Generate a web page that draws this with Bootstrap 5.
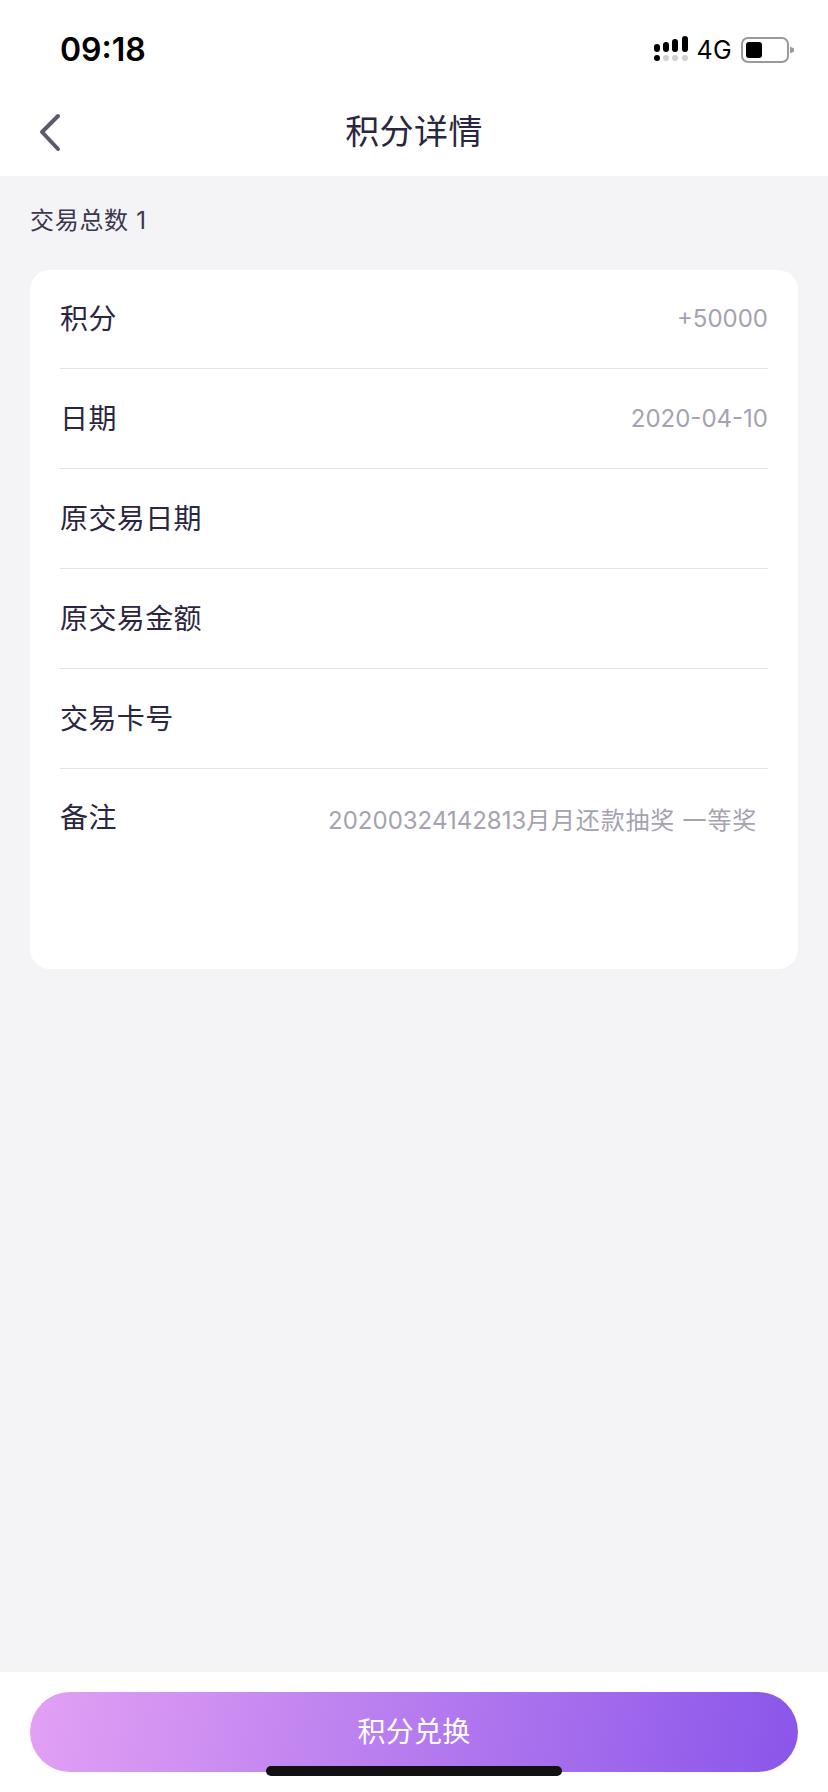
<!DOCTYPE html>
<html lang="zh-CN">
<head>
  <meta charset="UTF-8">
  <title>积分详情</title>
  <link href="https://cdn.jsdelivr.net/npm/bootstrap@5.3.2/dist/css/bootstrap.min.css" rel="stylesheet">
  <style>
    body { background: #f4f4f6; font-family: "Inter", "Noto Sans CJK SC", sans-serif; color: #2b2640; }
    .page-wrap { height: 1792px; }
    .status-bar { height: 88px; padding: 0 33px 0 60px; }
    .status-time { font-size: 32px; font-weight: 600; color: #000; line-height: 1; margin-top: 11px; }
    .status-net { font-size: 25px; color: #000; line-height: 1; margin: 12px 9px 0 7px; letter-spacing: .3px; }
    .status-icons { margin-top: 12px; }
    .title-bar { height: 88px; }
    .back-btn { left: 30px; top: 19px; width: 40px; height: 48px; }
    .page-title { font-size: 34px; line-height: 1; margin-top: -1px; letter-spacing: .4px; }
    .total-line { font-size: 24px; line-height: 34px; padding: 28px 30px 32px; color: #3c3650; letter-spacing: .7px; }
    .detail-card { margin: 0 30px; height: 699px; border: 0; border-radius: 20px; }
    .detail-row { height: 100px; margin: 0 30px; padding: 0; border-bottom: 1px solid #e3e3e6; }
    .detail-row:first-child { height: 99px; }
    .detail-row:last-child { border-bottom: 0; }
    .detail-row .row-label { font-size: 28px; line-height: 40px; letter-spacing: .4px; }
    .detail-row .row-value { font-size: 24px; line-height: 34px; color: #a5a2b1; }
    .note-row { padding-top: 29px; height: auto; }
    .note-row .row-value { padding-right: 11px; padding-top: 6px; }
    .note-cjk { letter-spacing: .8px; }
    .foot-bar { height: 120px; padding: 20px 30px 0; }
    .swap-btn { height: 80px; border: 0; border-radius: 40px; font-size: 28px; letter-spacing: .3px; color: #fff; background: linear-gradient(100deg, #e2a1f4 0%, #8a55ea 100%); }
    .home-bar { left: 266px; top: 1766px; width: 296px; height: 10px; border-radius: 5px; background: #111; }
  </style>
</head>
<body>
  <div class="page-wrap d-flex flex-column position-relative">
    <div class="bg-white">
      <div class="status-bar d-flex align-items-center">
        <span class="status-time">09:18</span>
        <svg class="status-icons ms-auto" width="36" height="28" viewBox="0 0 36 28">
          <rect x="0" y="8" width="6" height="8" rx="3" fill="#000"/>
          <rect x="9" y="6" width="6" height="10" rx="3" fill="#000"/>
          <rect x="18" y="3" width="6" height="13" rx="3" fill="#000"/>
          <rect x="28" y="0" width="6" height="16" rx="3" fill="#000"/>
          <circle cx="3" cy="22" r="3" fill="#000"/>
          <circle cx="12" cy="22" r="3" fill="#d0d0d0"/>
          <circle cx="21" cy="22" r="3" fill="#d0d0d0"/>
          <circle cx="31" cy="22" r="3" fill="#d0d0d0"/>
        </svg>
        <span class="status-net">4G</span>
        <svg class="status-icons" width="54" height="26" viewBox="0 0 54 26">
          <rect x="1" y="1" width="46" height="24" rx="6" fill="none" stroke="#999" stroke-width="2"/>
          <rect x="5" y="5" width="16" height="16" rx="3" fill="#000"/>
          <path d="M49 9.5 L53 11.5 V14.5 L49 16.5 Z" fill="#999"/>
        </svg>
      </div>
      <div class="title-bar position-relative d-flex align-items-center justify-content-center">
        <svg class="back-btn position-absolute" viewBox="0 0 40 48">
          <path d="M28 9 L12 25 L28 42" fill="none" stroke="#5f5670" stroke-width="4" stroke-linecap="round" stroke-linejoin="round"/>
        </svg>
        <span class="page-title">积分详情</span>
      </div>
    </div>

    <div class="total-line">交易总数 1</div>

    <div class="card detail-card">
      <div class="list-group list-group-flush">
        <div class="detail-row d-flex justify-content-between align-items-center">
          <span class="row-label">积分</span><span class="row-value">+50000</span>
        </div>
        <div class="detail-row d-flex justify-content-between align-items-center">
          <span class="row-label">日期</span><span class="row-value">2020-04-10</span>
        </div>
        <div class="detail-row d-flex align-items-center"><span class="row-label">原交易日期</span></div>
        <div class="detail-row d-flex align-items-center"><span class="row-label">原交易金额</span></div>
        <div class="detail-row d-flex align-items-center"><span class="row-label">交易卡号</span></div>
        <div class="detail-row note-row d-flex justify-content-between align-items-start">
          <span class="row-label">备注</span><span class="row-value">20200324142813<span class="note-cjk">月月还款抽奖 一等奖</span></span>
        </div>
      </div>
    </div>

    <div class="foot-bar bg-white mt-auto">
      <button type="button" class="btn swap-btn w-100">积分兑换</button>
    </div>
    <div class="home-bar position-absolute"></div>
  </div>
  <script src="https://cdn.jsdelivr.net/npm/bootstrap@5.3.2/dist/js/bootstrap.bundle.min.js"></script>
</body>
</html>
